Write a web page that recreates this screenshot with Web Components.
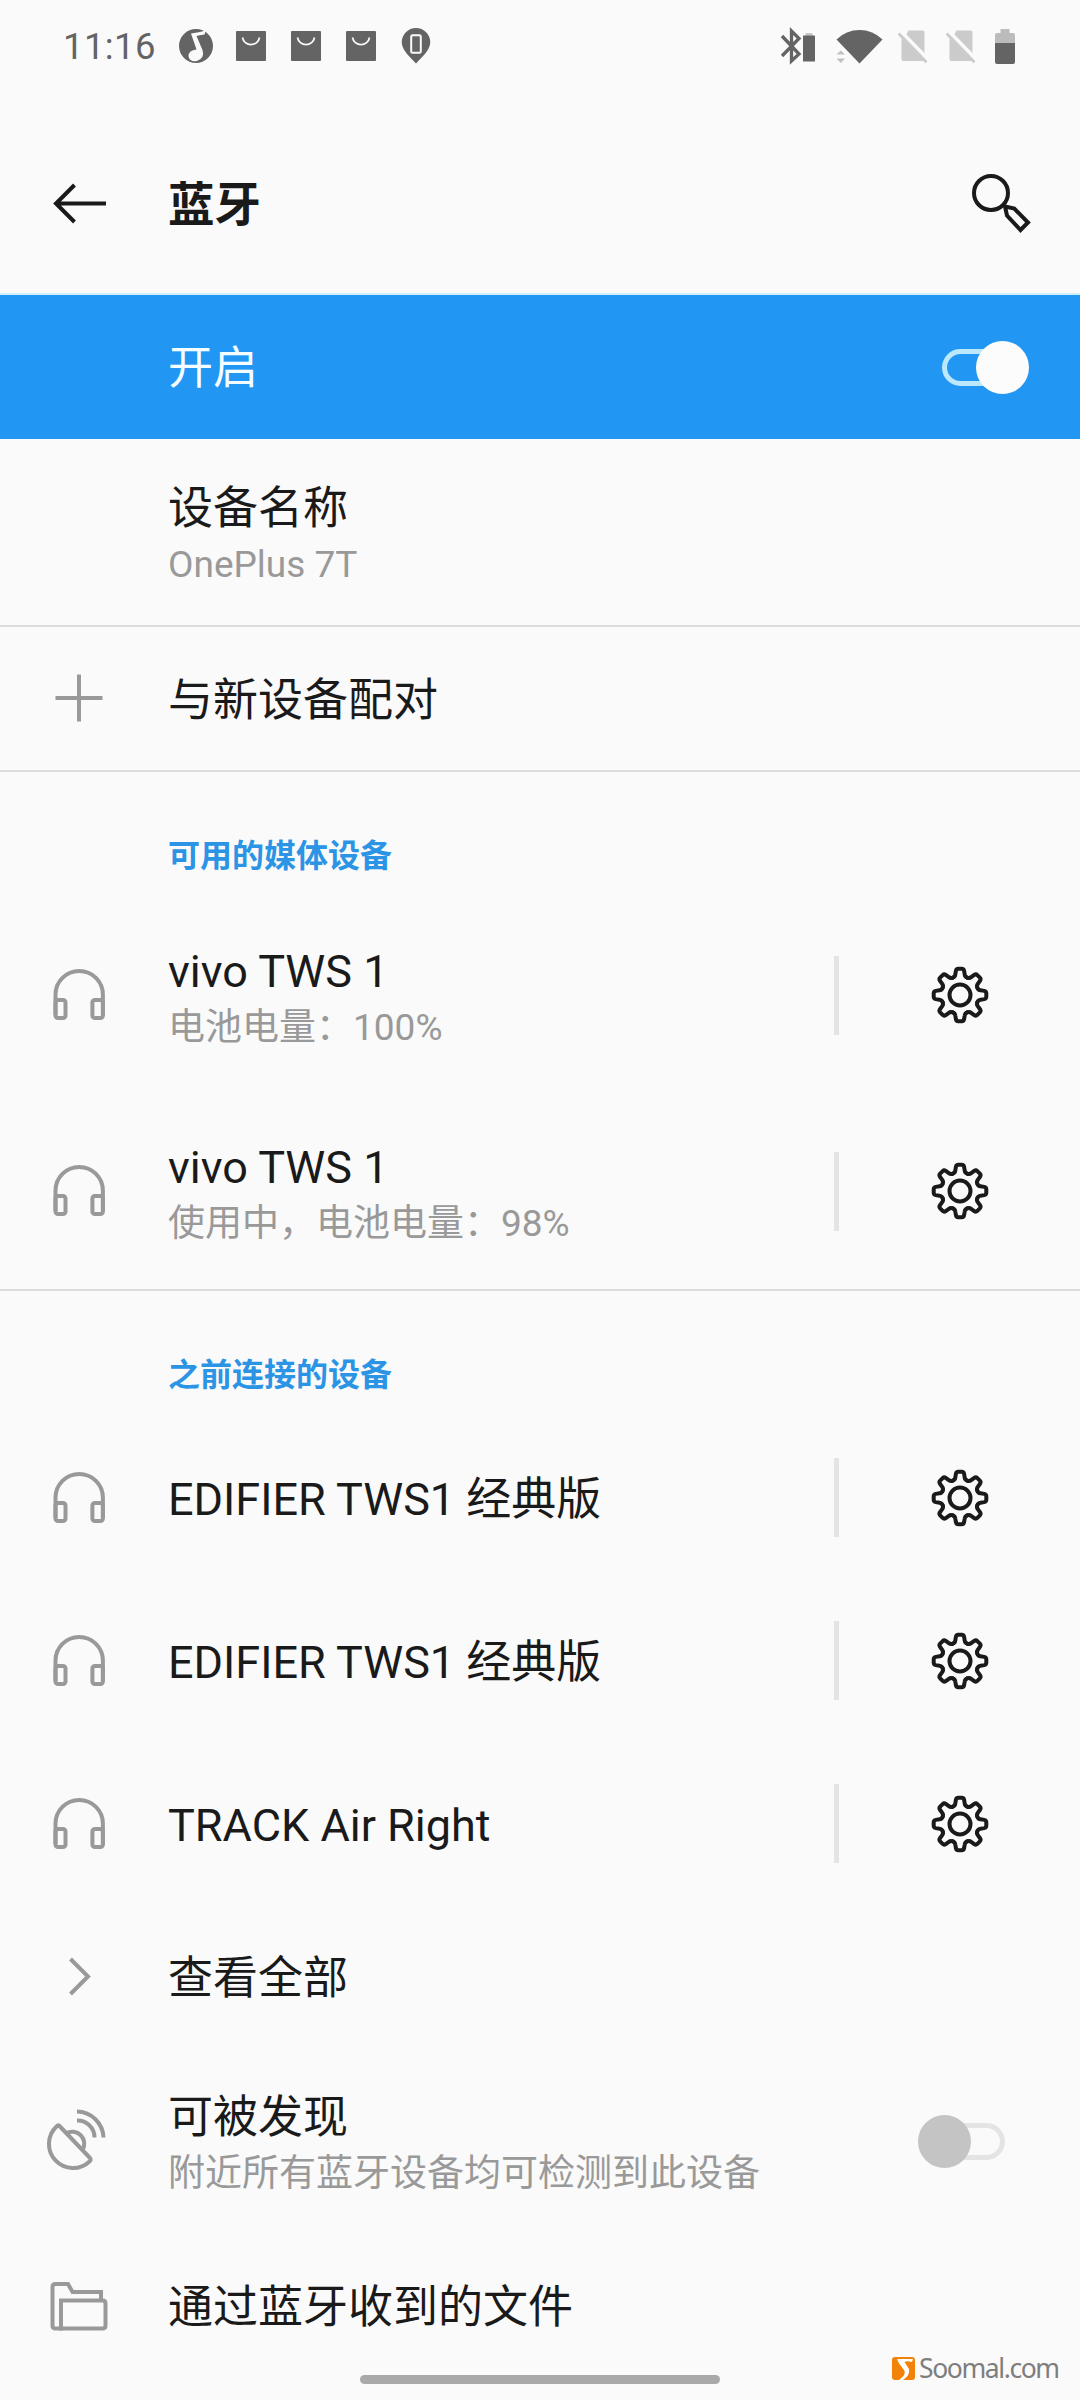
<!DOCTYPE html>
<html lang="zh-CN">
<head>
<meta charset="UTF-8">
<title>蓝牙</title>
<style>
body {
    margin: 0;
    width: 1080px;
    height: 2400px;
    overflow: hidden;
    background: #fafafa;
    color: #1a1a1a;
    font-family: Roboto, "Noto Sans CJK SC", sans-serif;
}
</style>
</head>
<body>
<bluetooth-page></bluetooth-page>

<script>
// one tooth of the gear, turned 8 times
const tooth = 'M-7.2 -17.4C-5.5 -18 -4.9 -18.8 -4.7 -20.5L-4.1 -24.2Q-3.7 -26.3 -1.8 -26.3H1.8Q3.7 -26.3 4.1 -24.2L4.7 -20.5C4.9 -18.8 5.5 -18 7.2 -17.4'
const teeth = [0, 45, 90, 135, 180, 225, 270, 315]
    .map(a => `<path d="${tooth}" transform="rotate(${a})"/>`).join('')

// name: [width, height, viewBox, content]
const line = 'fill="none" stroke="currentColor" stroke-width="4"'
const icons = {
    back: [60, 60, '0 0 60 60', `<g ${line}><path d="M7.5 30.5H58M26.5 12L8 30.5L26.5 49"/></g>`],
    search: [60, 60, '0 0 60 60', `<g ${line}><circle cx="20" cy="20" r="17"/><path d="M34 33.5L43.3 35.5L57 49.5L49.5 57L36 42.5Z"/></g>`],
    plus: [60, 60, '0 0 60 60', `<path ${line} d="M6.5 29H53.5M30 5.5V52.5"/>`],
    headphones: [60, 60, '0 0 60 60', `<g ${line}><path d="M6.5 50V29.7A23.7 23.7 0 0 1 53.9 29.7V50"/><rect x="6.5" y="35" width="10" height="18" rx="2.5"/><rect x="43.4" y="35" width="10.5" height="18" rx="2.5"/></g>`],
    chevron: [60, 60, '0 0 60 60', `<path ${line} d="M21.5 12L39 29.5L21.5 47"/>`],
    dish: [60, 60, '0 0 60 60', `<g ${line} stroke-linejoin="round"><path d="M7.5 15.5A24 24 0 0 0 40.5 50.5Q42.5 49 41 47L10.5 15Q9 13.5 7.5 15.5Z"/><path d="M17 22.5A12 12 0 0 1 33.5 39"/><path d="M28 .5A27 27 0 0 1 54.5 26.5M28 9.5A17 17 0 0 1 45.5 26.5"/></g>`],
    folder: [60, 60, '0 0 60 60', `<g ${line}><path d="M52 24V16H23.5L19 8H6.5Q3.5 8 3.5 11V49.5Q3.5 52.5 6.5 52.5H14"/><path d="M12 52.5V24.5H53.5Q56.5 24.5 56.5 27.5V49.5Q56.5 52.5 53.5 52.5Z"/></g>`],
    gear: [60, 60, '-30 -30 60 60', `<g ${line} stroke-linecap="round">${teeth}<circle r="10.5"/></g>`],
    music: [36, 36, '0 0 36 36', `<circle cx="18" cy="18" r="17" fill="#646464"/><path fill="#fafafa" d="M28 2L26.5 6.5Q21 7 18.5 8L24.5 22Q27 30 19 33Q12 34.5 10.5 28.5Q10.5 22 18.5 21.5L13 5.5Q20 4.5 24 3.5Z"/>`],
    bag: [30, 30, '0 0 30 30', `<rect width="30" height="30" rx="1" fill="#646464"/><path d="M6.5 6.5A8.6 8.3 0 0 0 23.5 6.5" fill="none" stroke="#fafafa" stroke-width="1.7"/>`],
    pin: [30, 36, '0 0 30 36', `<path d="M15 0A14.2 14.2 0 0 1 29.2 14.5C29.2 22 21 29 15 35.5C9 29 .8 22 .8 14.5A14.2 14.2 0 0 1 15 0Z" fill="#646464"/><rect x="10.2" y="7.2" width="9.6" height="17.5" rx="1.5" fill="none" stroke="#fafafa" stroke-width="2"/>`],
    bluetooth: [35, 36, '0 0 35 36', `<path d="M2 8L19 26L11.5 33V3L19 10.5L2 28" fill="none" stroke="#646464" stroke-width="3.3"/><rect x="25.5" y="5" width="7" height="3" fill="#c8c8c8"/><rect x="23" y="7.5" width="12" height="26" rx=".5" fill="#646464"/>`],
    wifi: [47, 36, '0 0 47 36', `<path d="M.5 11.5Q10 2 23.5 2T46.5 11.5L23.5 35.5Z" fill="#646464"/><path d="M4.5 18L10.5 27.5V31H0V22Z" fill="#fafafa"/><path d="M.5 26.5L4.8 22.5L9 26.5ZM.5 30.5H9L4.8 35Z" fill="#c0c0c0"/>`],
    nosim: [30, 34, '0 0 30 34', `<path d="M10.5 1.5H24.5Q26.5 1.5 26.5 3.5V24L8.5 5.5ZM3.5 9L26 32H5.5Q3.5 32 3.5 30Z" fill="#cbcbcb"/><path d="M.7 4.5L28.5 33.2" stroke="#cbcbcb" stroke-width="2.8"/>`],
    battery: [20, 35, '0 0 20 35', `<path d="M0 14V6Q0 4 2 4H5.5V0H14.5V4H18Q20 4 20 6V14Z" fill="#bcbcbc"/><path d="M0 14H20V33Q20 35 18 35H2Q0 35 0 33Z" fill="#646464"/>`],
    soomal: [23, 23, '0 0 23 23', `<rect width="23" height="23" rx="3" fill="#f28208"/><path d="M5.5 2H21L20 5Q15 3.5 12.5 5L17 12Q18.5 18 11 23H7Q15 17 12 13L7.5 7Q5 4 5.5 2Z" fill="#fff"/>`]
}

class UiIcon extends HTMLElement {
    connectedCallback() {
        const [w, h, box, content] = icons[this.getAttribute('name')]
        this.attachShadow({mode: 'open'}).innerHTML = `
        <style>
        :host { display: block; flex: none; }
        svg { display: block; overflow: visible; }
        </style>
        <svg width="${w}" height="${h}" viewBox="${box}">${content}</svg>
        `
    }
}
window.customElements.define('ui-icon', UiIcon)

class StatusBar extends HTMLElement {
    constructor() {
        super()
        this.attachShadow({mode: 'open'}).innerHTML = `
        <style>
        :host {
            display: flex;
            justify-content: space-between;
            box-sizing: border-box;
            height: 92px;
            padding: 0 65px 0 63px;
            color: #646464;
        }
        div { display: flex; align-items: center; }
        .left { gap: 25px; }
        .time { width: 90px; padding-top: 2px; font-size: 36.5px; letter-spacing: .4px; line-height: 92px; }
        .music { margin-right: -3px; }
        .wifi { margin: 0 15px 0 21px; }
        .sims { gap: 18px; }
        .battery { margin-left: 1px; }
        </style>
        <div class="left">
            <span class="time">11:16</span>
            <ui-icon class="music" name="music"></ui-icon>
            <ui-icon name="bag"></ui-icon>
            <ui-icon name="bag"></ui-icon>
            <ui-icon name="bag"></ui-icon>
            <ui-icon name="pin"></ui-icon>
        </div>
        <div class="right">
            <ui-icon name="bluetooth"></ui-icon>
            <ui-icon class="wifi" name="wifi"></ui-icon>
            <div class="sims">
                <ui-icon name="nosim"></ui-icon>
                <ui-icon name="nosim"></ui-icon>
                <ui-icon class="battery" name="battery"></ui-icon>
            </div>
        </div>
        `
    }
}
window.customElements.define('status-bar', StatusBar)

class AppBar extends HTMLElement {
    constructor() {
        super()
        this.attachShadow({mode: 'open'}).innerHTML = `
        <style>
        :host {
            display: flex;
            align-items: flex-start;
            box-sizing: border-box;
            height: 202px;
            padding: 81px 49px 0 48px;
        }
        h1 {
            flex: 1;
            margin: 2px 0 0 60px;
            font-size: 46.5px;
            font-weight: 700;
            line-height: 60px;
        }
        </style>
        <ui-icon name="back"></ui-icon>
        <h1><slot></slot></h1>
        <ui-icon name="search"></ui-icon>
        `
    }
}
window.customElements.define('app-bar', AppBar)

class ToggleSwitch extends HTMLElement {
    constructor() {
        super()
        this.attachShadow({mode: 'open'}).innerHTML = `
        <style>
        :host {
            display: flex;
            align-items: center;
            width: 87px;
            height: 53px;
            margin-right: 75px;
            --knob: #c4c4c4;
            --track: #e4e4e4;
        }
        :host([on]) {
            flex-direction: row-reverse;
            margin-right: 51px;
            --knob: #fcfcfc;
            --track: #bbe8fd;
        }
        .knob { width: 53px; height: 53px; border-radius: 50%; background: var(--knob); z-index: 1; }
        .track {
            box-sizing: border-box;
            width: 61px;
            height: 37px;
            margin: 0 0 0 -27px;
            border: 5px solid var(--track);
            border-radius: 19px;
        }
        :host([on]) .track { margin: 0 -27px 0 0; }
        </style>
        <div class="knob"></div>
        <div class="track"></div>
        `
    }
}
window.customElements.define('toggle-switch', ToggleSwitch)

class SettingRow extends HTMLElement {
    constructor() {
        super()
        this.attachShadow({mode: 'open'})
    }
    connectedCallback() {
        const icon = this.getAttribute('icon')
        const summary = this.getAttribute('summary')
        this.shadowRoot.innerHTML = `
        <style>
        :host {
            display: grid;
            grid-template-columns: 157px 1fr auto;
            align-items: center;
            height: 143px;
        }
        :host([summary]) { height: 186px; }
        :host([primary]) { height: 144px; background: #2196f3; color: #f4fdff; box-shadow: 0 -2px #cdf0fc; }
        :host([device]) { height: 163px; }
        :host([device][summary]) { height: 196px; }
        .icon { display: flex; justify-content: center; color: #999; }
        .text { padding: 4px 0 0 11px; white-space: nowrap; }
        :host([summary]) .text { padding-top: 7px; }
        .title { font-size: 45px; line-height: 58px; }
        .summary { font-size: 37px; line-height: 54px; color: #999; }
        .settings {
            display: flex;
            align-items: center;
            justify-content: center;
            box-sizing: border-box;
            width: 246px;
            height: 79px;
            border-left: 5px solid #e4e4e4;
        }
        </style>
        <div class="icon">${icon ? `<ui-icon name="${icon}"></ui-icon>` : ''}</div>
        <div class="text">
            <div class="title"><slot></slot></div>
            ${summary ? `<div class="summary">${summary}</div>` : ''}
        </div>
        ${this.hasAttribute('device') ? '<div class="settings"><ui-icon name="gear"></ui-icon></div>' : '<slot name="action"></slot>'}
        `
    }
}
window.customElements.define('setting-row', SettingRow)

class SettingGroup extends HTMLElement {
    constructor() {
        super()
        this.attachShadow({mode: 'open'})
    }
    connectedCallback() {
        const label = this.getAttribute('label')
        this.shadowRoot.innerHTML = `
        <style>
        :host { display: block; }
        :host([line]) { border-top: 2px solid #dcdcdc; }
        h2 {
            box-sizing: border-box;
            height: 125px;
            margin: 0;
            padding: 61px 0 0 168px;
            font-size: 32px;
            font-weight: 700;
            line-height: 46px;
            color: #2b94e4;
        }
        </style>
        ${label ? `<h2>${label}</h2>` : ''}
        <slot></slot>
        `
    }
}
window.customElements.define('setting-group', SettingGroup)

class SiteMark extends HTMLElement {
    constructor() {
        super()
        this.attachShadow({mode: 'open'}).innerHTML = `
        <style>
        /* lies over the list, in the corner */
        :host {
            position: absolute;
            left: 892px;
            top: 2350px;
            display: flex;
            align-items: center;
            gap: 4px;
            height: 37px;
            font: 26.5px/37px "Noto Sans", sans-serif;
            letter-spacing: -1.4px;
            color: #7e7e7e;
        }
        </style>
        <ui-icon name="soomal"></ui-icon>
        <span><slot></slot></span>
        `
    }
}
window.customElements.define('site-mark', SiteMark)

class BluetoothPage extends HTMLElement {
    constructor() {
        super()
        this.attachShadow({mode: 'open'}).innerHTML = `
        <style>
        :host { display: block; position: relative; height: 2400px; }
        main { padding-top: 1px; }
        /* gesture bar over the end of the list */
        .home {
            position: absolute;
            left: 360px;
            top: 2375px;
            width: 360px;
            height: 9px;
            border-radius: 5px;
            background: #a9a9a9;
        }
        </style>
        <status-bar></status-bar>
        <app-bar>蓝牙</app-bar>
        <main>
            <setting-group>
                <setting-row primary>开启<toggle-switch slot="action" on></toggle-switch></setting-row>
                <setting-row summary="OnePlus 7T">设备名称</setting-row>
            </setting-group>
            <setting-group line>
                <setting-row icon="plus">与新设备配对</setting-row>
            </setting-group>
            <setting-group line label="可用的媒体设备">
                <setting-row device icon="headphones" summary="电池电量：100%">vivo TWS 1</setting-row>
                <setting-row device icon="headphones" summary="使用中，电池电量：98%">vivo TWS 1</setting-row>
            </setting-group>
            <setting-group line label="之前连接的设备">
                <setting-row device icon="headphones">EDIFIER TWS1 经典版</setting-row>
                <setting-row device icon="headphones">EDIFIER TWS1 经典版</setting-row>
                <setting-row device icon="headphones">TRACK Air Right</setting-row>
                <setting-row icon="chevron">查看全部</setting-row>
                <setting-row icon="dish" summary="附近所有蓝牙设备均可检测到此设备">可被发现<toggle-switch slot="action"></toggle-switch></setting-row>
                <setting-row icon="folder">通过蓝牙收到的文件</setting-row>
            </setting-group>
        </main>
        <div class="home"></div>
        <site-mark>Soomal.com</site-mark>
        `
    }
}
window.customElements.define('bluetooth-page', BluetoothPage)
</script>
</body>
</html>
